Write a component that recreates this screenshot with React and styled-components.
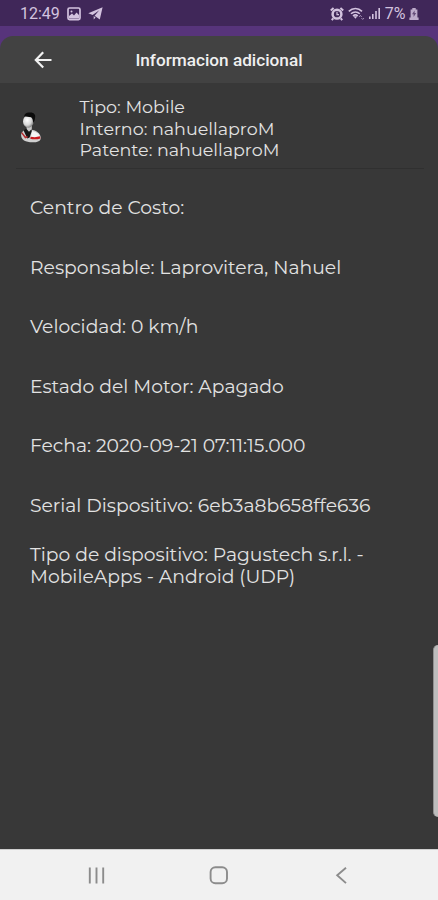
import React from "react";
import styled, { createGlobalStyle } from "styled-components";

const Global = createGlobalStyle`
  * { box-sizing: border-box; }
  body { margin: 0; background: #383838; }
`;

const Screen = styled.div`
  position: relative;
  display: flex;
  flex-direction: column;
  width: 438px;
  height: 900px;
  overflow: hidden;
  background: #383838;
  color: #e2e2e2;
  font-family: Montserrat, Inter, sans-serif;
`;

const StatusBar = styled.div`
  display: flex;
  justify-content: space-between;
  align-items: center;
  height: 26px;
  padding: 1px 19px 0 20px;
  background: #402759;
  color: #d3c3df;
  font: 16px/26px Roboto, sans-serif;
`;

const StatusGroup = styled.div`
  display: flex;
  align-items: center;
  gap: ${(p) => p.$gap}px;
`;

const Backdrop = styled.div`
  flex: none;
  padding-top: 10px;
  background: #57347b;
`;

const AppBar = styled.header`
  display: grid;
  grid-template-columns: 86px 1fr 86px;
  align-items: center;
  height: 47px;
  border-radius: 13px 13px 0 0;
  background: #424242;
`;

const BackButton = styled.button`
  display: flex;
  width: 86px;
  padding: 1px 0 0 34px;
  border: 0;
  background: none;
  color: #f2f2f2;
`;

const Title = styled.h1`
  margin: 0;
  padding-top: 1px;
  color: #f0f0f0;
  font: 500 17.2px/24px Roboto, sans-serif;
  text-align: center;
`;

const Summary = styled.section`
  display: flex;
  align-items: center;
  height: 86px;
  margin: 0 14px 0 16px;
  padding: 4px 0 0 3px;
  border-bottom: 1px solid #303030;
`;

const Avatar = styled.div`
  width: 60px;
  height: 32px;
`;

const SummaryText = styled.div`
  padding: 2px 0 0 0.5px;
  font-size: 17.5px;
  line-height: 21.4px;
`;

const Details = styled.ul`
  flex: 1;
  margin: 0;
  padding: 9.4px 40px 0 30px;
  list-style: none;
`;

const Detail = styled.li`
  display: flex;
  align-items: center;
  height: 59.6px;
  font-size: 18.76px;
  line-height: 22.2px;
`;

const EdgeHandle = styled.div`
  position: absolute;
  top: 645px;
  right: 0;
  width: 5px;
  height: 172px;
  border-left: 1px solid #909090;
  border-radius: 5px 0 0 5px;
  background: #bdbdbd;
`;

const NavBar = styled.nav`
  display: flex;
  justify-content: center;
  gap: 98.5px;
  height: 51px;
  padding-top: 14px;
  border-top: 1px solid #cfcfcf;
  background: #f1f1f1;
  color: #8c8c8c;
`;

const NavButton = styled.button`
  display: flex;
  width: 24px;
  height: 24px;
  padding: 0;
  border: 0;
  background: none;
  color: inherit;
`;

const summary = ["Tipo: Mobile", "Interno: nahuellaproM", "Patente: nahuellaproM"];
const details = [
  "Centro de Costo:",
  "Responsable: Laprovitera, Nahuel",
  "Velocidad: 0 km/h",
  "Estado del Motor: Apagado",
  "Fecha: 2020-09-21 07:11:15.000",
  "Serial Dispositivo: 6eb3a8b658ffe636",
  "Tipo de dispositivo: Pagustech s.r.l. - MobileApps - Android (UDP)",
];

const PictureIcon = () => (
  <svg width="14" height="14" viewBox="0 0 14 14" fill="none" stroke="currentColor">
    <rect x="1" y="1" width="12" height="11.6" rx="1.5" strokeWidth="1.7" />
    <path d="M2 11.500V9l3-2.500 2 2 2.500-3L12 8v3.500z" fill="currentColor" stroke="none" />
    <circle cx="4.5" cy="4.4" r="1" fill="currentColor" stroke="none" />
  </svg>
);

const SendIcon = () => (
  <svg width="15" height="13" viewBox="0 0 15 13" fill="currentColor">
    <path d="M14.600.3.3 6.300l4.300 1.800L11.300 3.300 6.600 8.700l5.200 3.900zM5.700 9v3.500l1.900-1.900z" />
  </svg>
);

const AlarmIcon = () => (
  <svg width="14" height="14" viewBox="0 0 14 14" fill="none" stroke="currentColor">
    <path d="M.8 3.600 3.600 1M13.200 3.600 10.400 1M3.200 11.400l-1.400 1.800M10.800 11.400l1.400 1.800" strokeWidth="2" />
    <circle cx="7" cy="7.200" r="4.400" strokeWidth="2.500" />
    <path d="M7 4.800v2.900h2" strokeWidth="1.200" />
  </svg>
);

const WifiIcon = () => (
  <svg width="17" height="14" viewBox="0 0 17 14" fill="none" stroke="currentColor" strokeWidth="1.6">
    <path d="M.8 4.4C4.6.5 10.2.5 14 4.4M3 6.8c2.500-2.500 6.300-2.500 8.800 0M5 9c1.500-1.400 3.300-1.400 4.800 0" />
    <path d="M5.4 9.3h4l-2 2.4z" fill="currentColor" stroke="none" />
    <path d="m11 10 1.4-1.6 1.4 1.6M13.4 11l1.3 1.4L16 11" strokeWidth="1" opacity=".65" />
  </svg>
);

const SignalIcon = () => (
  <svg width="13" height="13" viewBox="0 0 13 13" fill="currentColor">
    <path d="M1 9.5h1.6V12H1zM4 7h1.6v5H4zM7.2 4h1.6v8H7.2zM10.4 1H12v11h-1.6z" />
  </svg>
);

const BatteryIcon = () => (
  <svg width="10" height="14" viewBox="0 0 10 14" fill="currentColor">
    <path d="M3.3 1h3.4v1.400h1.700v8H1.600v-8h1.700zM.4 10.400h9.200V13H.4z" opacity=".85" />
    <path d="M5.600 3.400 3 7.300h1.600v2.600L7.200 6H5.600z" fill="#644c78" />
  </svg>
);

const BackArrow = () => (
  <svg width="18" height="18" viewBox="0 0 18 18" fill="none" stroke="currentColor" strokeWidth="2.2">
    <path d="M9.2 1.2 1.8 9l7.4 7.6M2 9h15.5" />
  </svg>
);

const Person = () => (
  <svg width="24" height="32" viewBox="0 0 24 32">
    <defs>
      <radialGradient id="face" cx=".4" cy=".4" r=".65">
        <stop offset="0" stopColor="#fff" />
        <stop offset=".6" stopColor="#d8d8d8" />
        <stop offset="1" stopColor="#777" />
      </radialGradient>
    </defs>
    <path d="M2.200 22c1-3.600 4-5 7.300-4.800 6 .2 11.800 3.200 12.300 8.200.3 3.600-3.400 4.900-8.300 4.900C6.800 30.300 1.400 28 2.200 22z" fill="#cfcfcf" />
    <path d="M13 19c4.500 1 7.500 3.200 8.200 6.200-3 1-6.200 1-9.300.2z" fill="#f4f4f4" />
    <path d="M4.600 18.500 8 15.800l5 2.800-2.400 6.800-2.300 1z" fill="#151515" />
    <path d="m2.700 20.600 3.700 4.900 2.200-.8" fill="none" stroke="#b52b2e" strokeWidth="1.5" />
    <path d="M11.500 25.700c3.200.8 6.400.7 9.700-.3" fill="none" stroke="#c7191e" strokeWidth="2.2" />
    <path d="M7.600 12h5.200v5L10 19.800 7.600 17z" fill="#c9c9c9" />
    <ellipse cx="9.300" cy="9.400" rx="5.300" ry="6.300" fill="url(#face)" />
    <path d="M5 4.500C5.500 1.500 7.800.4 10.400.6c3.900-.6 6.400 1.700 5.700 5-.2 2.300-.8 3.800-2 5.500 0-3-.5-4.800-2-5.900C9.700 4.700 7 4.500 5 4.500z" fill="#0b0b0b" />
  </svg>
);

const RecentsIcon = () => (
  <svg width="24" height="24" viewBox="0 0 24 24" stroke="currentColor" strokeWidth="1.9">
    <path d="M4.800 3.500v16M11.500 3.500v16M18.200 3.500v16" />
  </svg>
);

const HomeIcon = () => (
  <svg width="24" height="24" viewBox="0 0 24 24" fill="none" stroke="currentColor" strokeWidth="1.9">
    <rect x="3.6" y="3.2" width="16.4" height="16" rx="4.8" />
  </svg>
);

const NavBackIcon = () => (
  <svg width="24" height="24" viewBox="0 0 24 24" fill="none" stroke="currentColor" strokeWidth="1.9">
    <path d="m16 3.700-8.800 7.600 8.800 7.800" />
  </svg>
);

export default function App() {
  return (
    <>
      <Global />
      <Screen>
        <StatusBar>
          <StatusGroup $gap={7}>
            <span>12:49</span>
            <PictureIcon />
            <SendIcon />
          </StatusGroup>
          <StatusGroup $gap={3.5}>
            <AlarmIcon />
            <WifiIcon />
            <SignalIcon />
            <span>7%</span>
            <BatteryIcon />
          </StatusGroup>
        </StatusBar>
        <Backdrop>
          <AppBar>
            <BackButton aria-label="Volver"><BackArrow /></BackButton>
            <Title>Informacion adicional</Title>
          </AppBar>
        </Backdrop>
        <Summary>
          <Avatar><Person /></Avatar>
          <SummaryText>
            {summary.map((line) => <div key={line}>{line}</div>)}
          </SummaryText>
        </Summary>
        <Details>
          {details.map((line) => <Detail key={line}>{line}</Detail>)}
        </Details>
        <EdgeHandle />
        <NavBar>
          <NavButton aria-label="Recientes"><RecentsIcon /></NavButton>
          <NavButton aria-label="Inicio"><HomeIcon /></NavButton>
          <NavButton aria-label="Atrás"><NavBackIcon /></NavButton>
        </NavBar>
      </Screen>
    </>
  );
}
